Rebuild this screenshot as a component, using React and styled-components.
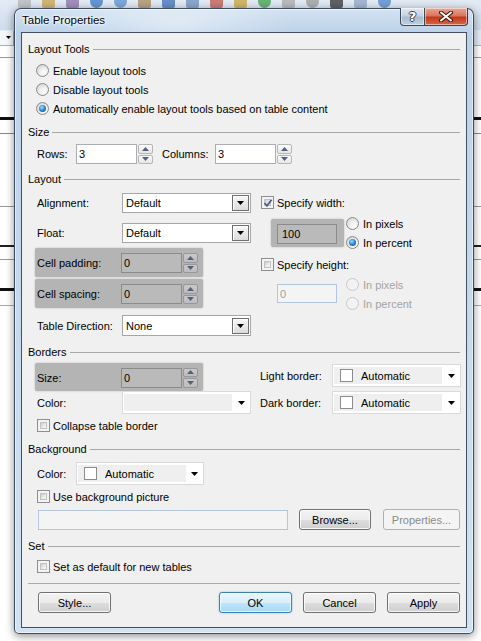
import React from "react";
import styled, { createGlobalStyle, css } from "styled-components";

const GlobalStyle = createGlobalStyle`
  html, body { margin: 0; padding: 0; background: #fff; }
  body {
    font-family: "Liberation Sans", Arial, sans-serif;
    font-size: 11px;
    color: #000;
  }
  * { box-sizing: border-box; }
`;

/* ---------- host application behind the dialog ---------- */

const Desktop = styled.div`
  position: relative;
  width: 481px;
  height: 641px;
  overflow: hidden;
  background: #fff;
`;

const HostToolbar = styled.div`
  height: 30px;
  display: flex;
  align-items: flex-start;
  gap: 11px;
  padding-left: 18px;
  background: linear-gradient(#e3ebf5, #cfdcec);
`;

const HostIcon = styled.span`
  flex: none;
  width: 13px;
  height: 13px;
  margin-top: -5px;
  border-radius: ${p => (p.$round ? "50%" : "2px")};
  background: ${p => p.$c};
  opacity: 0.75;
`;

const HostFormatBar = styled.div`
  height: 16px;
  display: flex;
  align-items: center;
  background: #e4ecf6;
  border-bottom: 1px solid #9db3cf;
`;

const HostCombo = styled.span`
  width: 14px;
  height: 14px;
  display: flex;
  align-items: center;
  justify-content: flex-end;
  padding-right: 2px;
  background: #f4f8fc;
  border-right: 1px solid #9db3cf;
`;

const HostDoc = styled.div`
  display: flex;
  flex-direction: column;
`;

const HostLine = styled.span`
  display: block;
  margin-top: ${p => p.$mt}px;
  height: ${p => p.$h}px;
  background: ${p => p.$c};
`;

/* ---------- dialog window ---------- */

const Window = styled.div`
  position: absolute;
  left: 14px;
  top: 8px;
  width: 460px;
  height: 626px;
  display: flex;
  flex-direction: column;
  padding: 0 6px 5px 6px;
  border: 1px solid rgba(25, 40, 60, 0.8);
  border-radius: 7px 7px 5px 5px;
  background:
    radial-gradient(ellipse 120px 40px at 160px 14px, rgba(255,255,255,0.45), transparent),
    linear-gradient(180deg, #d3e2f2 0px, #bcd1e8 24px, #c6d9ed 50%, #d2e2f2 100%);
  box-shadow: inset 0 0 0 1px rgba(255,255,255,0.55), 0 2px 9px rgba(0,0,0,0.45);
`;

const TitleBar = styled.div`
  height: 23px;
  display: flex;
  align-items: flex-start;
  justify-content: space-between;
`;

const Title = styled.span`
  padding: 5px 0 0 1px;
  font-size: 11.5px;
  color: #000;
  text-shadow: 0 0 5px #fff, 0 0 3px #fff, 0 0 2px #fff;
`;

const CaptionButtons = styled.div`
  display: flex;
  margin-top: -1px;
  margin-right: -1px;
`;

const CaptionButton = styled.span`
  height: 18px;
  width: ${p => p.$w}px;
  display: flex;
  align-items: center;
  justify-content: center;
  border: 1px solid rgba(40, 45, 55, 0.85);
  border-top: none;
  box-shadow: inset 0 0 0 1px rgba(255,255,255,0.5);
  ${p =>
    p.$close
      ? css`
          border-left: none;
          border-radius: 0 0 4px 0;
          background: linear-gradient(180deg, #e9a593 0%, #d9775e 45%, #c4391c 55%, #d2684b 100%);
        `
      : css`
          border-radius: 0 0 0 4px;
          background: linear-gradient(180deg, #dfe8f1 0%, #c3d2e2 45%, #a8bbd0 55%, #bfd0e2 100%);
        `}
`;

const HelpGlyph = styled.span`
  font-family: "DejaVu Sans", sans-serif;
  font-weight: bold;
  font-size: 13px;
  color: #fff;
  text-shadow: 1px 0 0 #33404f, -1px 0 0 #33404f, 0 1px 0 #33404f, 0 -1px 0 #33404f;
`;

const Client = styled.div`
  flex: 1;
  display: flex;
  flex-direction: column;
  padding: 0 6px;
  background: #f0f0f0;
  border: 1px solid rgba(35, 50, 70, 0.85);
`;

/* ---------- groups & rows ---------- */

const GroupHeader = styled.div`
  height: 14px;
  margin-top: ${p => p.$mt}px;
  display: flex;
  align-items: center;
  &::after {
    content: "";
    flex: 1;
    margin-left: 3px;
    border-top: 1px solid #a7a7a7;
  }
`;

const Row = styled.div`
  display: flex;
  align-items: center;
  height: ${p => p.$h || 19}px;
  margin-top: ${p => p.$mt || 0}px;
  padding-left: ${p => p.$pl || 0}px;
  gap: ${p => p.$gap || 0}px;
`;

const Label = styled.span`
  flex: none;
  width: ${p => (p.$w ? `${p.$w}px` : "auto")};
  margin-left: ${p => p.$ml || 0}px;
  white-space: nowrap;
  color: ${p => (p.$disabled ? "#a3a3a3" : "#000")};
`;

const TwoCols = styled.div`
  display: grid;
  grid-template-columns: 216px 1fr;
  column-gap: 9px;
  padding-left: 7px;
  margin-top: ${p => p.$mt}px;
  align-items: start;
`;

const Col = styled.div`
  display: flex;
  flex-direction: column;
`;

const Shaded = styled.div`
  width: ${p => p.$w}px;
  height: ${p => p.$h || 28}px;
  margin-top: ${p => p.$mt || 0}px;
  margin-left: ${p => p.$ml || 0}px;
  padding: 1px 0 0 ${p => p.$pl || 2}px;
  display: flex;
  align-items: center;
  background: #b4b4b4;
  border-radius: 2px;
  box-shadow: 0 0 2px rgba(0, 0, 0, 0.25);
`;

const Separator = styled.div`
  margin-top: 7px;
  height: 1px;
  background: #a9a9a9;
`;

/* ---------- controls ---------- */

const TriSvg = styled.svg`
  display: block;
  flex: none;
`;

const Tri = ({ up, w = 7, h = 4, color = "#000" }) => (
  <TriSvg width={w} height={h} viewBox={`0 0 ${w} ${h}`}>
    <polygon points={up ? `0,${h} ${w},${h} ${w / 2},0` : `0,0 ${w},0 ${w / 2},${h}`} fill={color} />
  </TriSvg>
);

const RadioCircle = styled.span`
  flex: none;
  width: 13px;
  height: 13px;
  border-radius: 50%;
  display: flex;
  align-items: center;
  justify-content: center;
  border: 1px solid ${p => (p.$disabled ? "#c8c8c8" : "#8a8a8a")};
  background: ${p =>
    p.$disabled
      ? "#f2f2f2"
      : "radial-gradient(circle at 65% 70%, #ffffff 0%, #ececec 45%, #c9c9c9 100%)"};
  &::after {
    content: "";
    display: ${p => (p.$checked ? "block" : "none")};
    width: 7px;
    height: 7px;
    border-radius: 50%;
    background: radial-gradient(circle at 40% 35%, #9fdcff 0%, #2a86d2 50%, #0c3f78 100%);
  }
`;

const Radio = ({ checked, disabled, children }) => (
  <>
    <RadioCircle $checked={checked} $disabled={disabled} />
    <Label $ml={4} $disabled={disabled}>{children}</Label>
  </>
);

const CheckBoxOuter = styled.span`
  flex: none;
  position: relative;
  width: 13px;
  height: 13px;
  padding: 2px;
  border: 1px solid #8e8e8e;
  background: #f4f4f4;
`;

const CheckBoxInner = styled.span`
  display: block;
  width: 100%;
  height: 100%;
  border: 1px solid #c2c2c2;
  background: linear-gradient(135deg, #cdcdcd 0%, #ececec 60%, #f8f8f8 100%);
`;

const CheckMark = styled.svg`
  position: absolute;
  left: 1px;
  top: 1px;
`;

const Check = ({ checked, children }) => (
  <>
    <CheckBoxOuter>
      <CheckBoxInner />
      {checked && (
        <CheckMark width="10" height="10" viewBox="0 0 10 10">
          <path d="M1.5 5 L4 7.8 L8.6 1.8" fill="none" stroke="#4a5d94" strokeWidth="1.8" />
        </CheckMark>
      )}
    </CheckBoxOuter>
    <Label $ml={3}>{children}</Label>
  </>
);

const Field = styled.span`
  flex: none;
  display: flex;
  align-items: center;
  width: ${p => p.$w}px;
  height: ${p => p.$h || 20}px;
  margin-left: ${p => p.$ml || 0}px;
  margin-top: ${p => p.$mt || 0}px;
  align-self: ${p => (p.$mt ? "flex-start" : "auto")};
  padding-left: ${p => p.$pad || 2}px;
  border: 1px solid #abadb3;
  background: #fff;
  ${p =>
    p.$shaded &&
    css`
      border-color: #8b8b8b;
      background: #bababa;
    `}
  ${p =>
    p.$disabled &&
    css`
      border-color: #b3c6de;
      background: #f4f4f4;
      color: #a0a0a0;
    `}
`;

const SpinBox = styled.span`
  flex: none;
  width: 15px;
  height: 20px;
  margin-left: 1px;
  display: flex;
  flex-direction: column;
  gap: 1px;
`;

const SpinHalf = styled.span`
  flex: 1;
  display: flex;
  align-items: center;
  justify-content: center;
  border: 1px solid ${p => (p.$shaded ? "#979797" : "#b6b6b6")};
  border-radius: 2px;
  background: ${p =>
    p.$shaded ? "linear-gradient(#c9c9c9, #bcbcbc)" : "linear-gradient(#fbfbfb, #e6e6e6)"};
`;

const Spinner = ({ shaded }) => (
  <SpinBox>
    <SpinHalf $shaded={shaded}>
      <Tri up w={7} h={4} color="#51627f" />
    </SpinHalf>
    <SpinHalf $shaded={shaded}>
      <Tri w={7} h={4} color="#51627f" />
    </SpinHalf>
  </SpinBox>
);

const SelectBox = styled.span`
  flex: none;
  width: 129px;
  height: ${p => p.$h || 20}px;
  display: flex;
  align-items: center;
  justify-content: space-between;
  padding: 0 1px 0 3px;
  border: 1px solid #a6a6a6;
  background: #fff;
`;

const DropButton = styled.span`
  width: 17px;
  height: 16px;
  display: flex;
  align-items: center;
  justify-content: center;
  border: 1px solid #6e6e6e;
  background: linear-gradient(#f7f7f7, #dcdcdc);
  box-shadow: inset 1px 1px 0 #fff;
`;

const Select = ({ value, h }) => (
  <SelectBox $h={h}>
    <span>{value}</span>
    <DropButton>
      <Tri w={7} h={4} />
    </DropButton>
  </SelectBox>
);

const ColorComboBox = styled.span`
  flex: none;
  width: ${p => p.$w}px;
  height: 23px;
  display: flex;
  align-items: center;
  padding: 2px 5px 2px 1px;
  border: 1px solid #dadada;
  background: #fff;
`;

const ComboFace = styled.span`
  width: ${p => p.$w}px;
  height: 100%;
  display: flex;
  align-items: center;
  gap: ${p => p.$gap}px;
  padding-left: ${p => p.$pad}px;
  background: #efefef;
`;

const Swatch = styled.span`
  flex: none;
  width: 13px;
  height: 13px;
  border: 1px solid #8c8c8c;
  background: #fff;
`;

const ArrowSlot = styled.span`
  margin-left: auto;
`;

const ColorCombo = ({ w, faceW, pad = 6, gap = 8, label }) => (
  <ColorComboBox $w={w}>
    <ComboFace $w={faceW} $pad={pad} $gap={gap}>
      {label && <Swatch />}
      {label && <span>{label}</span>}
    </ComboFace>
    <ArrowSlot>
      <Tri w={7} h={4} />
    </ArrowSlot>
  </ColorComboBox>
);

const PushButton = styled.span`
  flex: none;
  width: ${p => p.$w || 73}px;
  height: 21px;
  margin-left: ${p => p.$ml || 0}px;
  display: flex;
  align-items: center;
  justify-content: center;
  border: 1px solid #707070;
  border-radius: 3px;
  background: linear-gradient(#f3f3f3 0%, #ebebeb 50%, #dddddd 51%, #cfcfcf 100%);
  box-shadow: inset 0 0 0 1px rgba(255, 255, 255, 0.8);
  ${p =>
    p.$primary &&
    css`
      border-color: #3c7fb1;
      background: linear-gradient(#e9f6fd 0%, #d8effc 50%, #bee6fd 51%, #a6d9f4 100%);
      box-shadow: inset 0 0 0 1px rgba(255, 255, 255, 0.7), 0 0 2px #6cc6f7;
    `}
  ${p =>
    p.$disabled &&
    css`
      border-color: #adb2b5;
      background: #f4f4f4;
      color: #8a8a8a;
      box-shadow: none;
    `}
`;

const ButtonGroup = styled.div`
  margin-left: auto;
  display: flex;
  gap: 11px;
`;

/* ---------- data ---------- */

const hostIcons = [
  ["#b6b6b6", false], ["#c8a24a", false], ["#8a6fa8", false], ["#3b78c2", true],
  ["#5a8fd0", true], ["#a88a5a", false], ["#3d6fb8", false], ["#6d8fbf", false],
  ["#c0584a", false], ["#c9a23a", false], ["#3fa04a", true], ["#a9a9a9", false],
  ["#9a9a9a", true], ["#333333", false], ["#8ea6c6", false], ["#4f86c9", true],
];

const hostLines = [
  { mt: 11, h: 1, c: "#9a9a9a" },
  { mt: 59, h: 3, c: "#111" },
  { mt: 13, h: 1, c: "#888" },
  { mt: 72, h: 1, c: "#999" },
  { mt: 38, h: 2, c: "#222" },
  { mt: 12, h: 1, c: "#999" },
  { mt: 28, h: 3, c: "#111" },
  { mt: 14, h: 1, c: "#aaa" },
];

export default function App() {
  return (
    <Desktop>
      <GlobalStyle />
      <HostToolbar>
        {hostIcons.map(([c, round], i) => (
          <HostIcon key={i} $c={c} $round={round} />
        ))}
      </HostToolbar>
      <HostFormatBar>
        <HostCombo>
          <Tri w={5} h={3} />
        </HostCombo>
      </HostFormatBar>
      <HostDoc>
        {hostLines.map((l, i) => (
          <HostLine key={i} $mt={l.mt} $h={l.h} $c={l.c} />
        ))}
      </HostDoc>

      <Window>
        <TitleBar>
          <Title>Table Properties</Title>
          <CaptionButtons>
            <CaptionButton $w={25}>
              <HelpGlyph>?</HelpGlyph>
            </CaptionButton>
            <CaptionButton $w={43} $close>
              <svg width="14" height="11" viewBox="0 0 14 11">
                <path d="M2 1.5 L12 9.5 M12 1.5 L2 9.5" stroke="#3b1a12" strokeWidth="4" strokeLinecap="round" />
                <path d="M2 1.5 L12 9.5 M12 1.5 L2 9.5" stroke="#fff" strokeWidth="2" strokeLinecap="round" />
              </svg>
            </CaptionButton>
          </CaptionButtons>
        </TitleBar>

        <Client>
          <GroupHeader $mt={9}>Layout Tools</GroupHeader>
          <Row $mt={5} $pl={8}>
            <Radio>Enable layout tools</Radio>
          </Row>
          <Row $pl={8}>
            <Radio>Disable layout tools</Radio>
          </Row>
          <Row $pl={8}>
            <Radio checked>Automatically enable layout tools based on table content</Radio>
          </Row>

          <GroupHeader $mt={7}>Size</GroupHeader>
          <Row $mt={5} $h={20} $pl={9}>
            <Label $w={39}>Rows:</Label>
            <Field $w={61}>3</Field>
            <Spinner />
            <Label $w={53} $ml={9}>Columns:</Label>
            <Field $w={61}>3</Field>
            <Spinner />
          </Row>

          <GroupHeader $mt={8}>Layout</GroupHeader>
          <TwoCols $mt={7}>
            <Col>
              <Row $h={20} $pl={2}>
                <Label $w={85}>Alignment:</Label>
                <Select value="Default" />
              </Row>
              <Row $h={20} $mt={10} $pl={2}>
                <Label $w={85}>Float:</Label>
                <Select value="Default" />
              </Row>
              <Shaded $w={168} $h={29} $mt={5}>
                <Label $w={84}>Cell padding:</Label>
                <Field $w={61} $shaded>0</Field>
                <Spinner shaded />
              </Shaded>
              <Shaded $w={168} $h={29} $mt={2}>
                <Label $w={84}>Cell spacing:</Label>
                <Field $w={61} $shaded>0</Field>
                <Spinner shaded />
              </Shaded>
              <Row $h={21} $mt={7} $pl={2}>
                <Label $w={85}>Table Direction:</Label>
                <Select value="None" h={21} />
              </Row>
            </Col>
            <Col>
              <Row $pl={1}>
                <Check checked>Specify width:</Check>
              </Row>
              <Row $h={38} $mt={2}>
                <Shaded $w={73} $ml={11} $pl={6}>
                  <Field $w={60} $h={20} $shaded $pad={4}>100</Field>
                </Shaded>
                <Col>
                  <Row $pl={2}>
                    <Radio>In pixels</Radio>
                  </Row>
                  <Row $pl={2}>
                    <Radio checked>In percent</Radio>
                  </Row>
                </Col>
              </Row>
              <Row $mt={3} $pl={1}>
                <Check>Specify height:</Check>
              </Row>
              <Row $h={38} $mt={1}>
                <Field $w={60} $h={19} $ml={17} $mt={9} $disabled>
                  0
                </Field>
                <Col>
                  <Row $pl={9}>
                    <Radio disabled>In pixels</Radio>
                  </Row>
                  <Row $pl={9}>
                    <Radio disabled>In percent</Radio>
                  </Row>
                </Col>
              </Row>
            </Col>
          </TwoCols>

          <GroupHeader $mt={9}>Borders</GroupHeader>
          <TwoCols $mt={4}>
            <Col>
              <Shaded $w={168}>
                <Label $w={84}>Size:</Label>
                <Field $w={61} $shaded>0</Field>
                <Spinner shaded />
              </Shaded>
              <Row $h={23} $pl={2}>
                <Label $w={85}>Color:</Label>
                <ColorCombo w={129} faceW={108} />
              </Row>
              <Row $mt={2} $pl={2}>
                <Check>Collapse table border</Check>
              </Row>
            </Col>
            <Col>
              <Row $h={23} $mt={1}>
                <Label $w={72}>Light border:</Label>
                <ColorCombo w={129} faceW={108} label="Automatic" />
              </Row>
              <Row $h={23} $mt={4}>
                <Label $w={72}>Dark border:</Label>
                <ColorCombo w={129} faceW={108} label="Automatic" />
              </Row>
            </Col>
          </TwoCols>

          <GroupHeader $mt={7}>Background</GroupHeader>
          <Row $h={23} $mt={6} $pl={9}>
            <Label $w={39}>Color:</Label>
            <ColorCombo w={128} faceW={108} label="Automatic" />
          </Row>
          <Row $mt={2} $pl={9}>
            <Check>Use background picture</Check>
          </Row>
          <Row $h={21} $mt={3} $pl={10}>
            <Field $w={250} $disabled />
            <PushButton $w={72} $ml={11}>Browse...</PushButton>
            <PushButton $w={77} $ml={12} $disabled>
              Properties...
            </PushButton>
          </Row>

          <GroupHeader $mt={9}>Set</GroupHeader>
          <Row $mt={4} $pl={9}>
            <Check>Set as default for new tables</Check>
          </Row>
          <Separator />
          <Row $h={21} $mt={8} $pl={10}>
            <PushButton>Style...</PushButton>
            <ButtonGroup>
              <PushButton $primary>OK</PushButton>
              <PushButton>Cancel</PushButton>
              <PushButton>Apply</PushButton>
            </ButtonGroup>
          </Row>
        </Client>
      </Window>
    </Desktop>
  );
}
